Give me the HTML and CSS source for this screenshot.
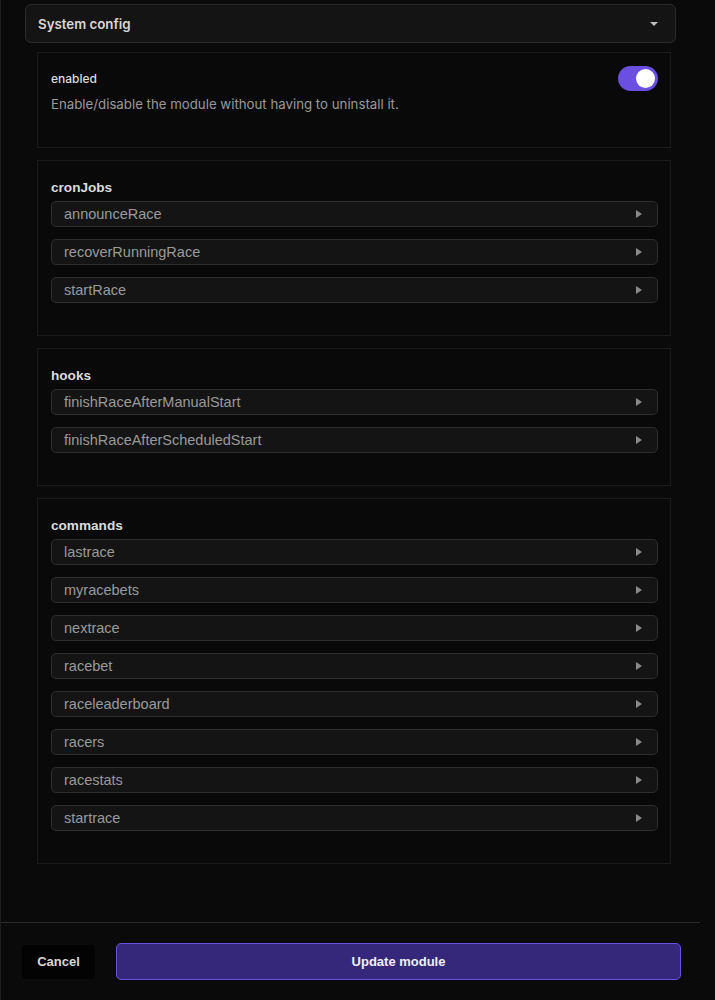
FILE: index.html
```html
<!DOCTYPE html>
<html lang="en">
<head>
  <meta charset="UTF-8">
  <meta name="viewport" content="width=device-width, initial-scale=1.0">
  <title>Module config</title>
  <link rel="stylesheet" href="styles.css">
</head>
<body>
  <div class="drawer">
    <div class="drawer-body">
      <div class="accordion">
        <span>System config</span>
        <svg class="caret" width="8" height="4" viewBox="0 0 8 4"><path d="M0 0h8L4 4z" fill="#bdbdbd"/></svg>
      </div>

      <section class="card card-enabled">
        <div class="field-row">
          <span class="field-label">enabled</span>
          <span class="toggle"><span class="knob"></span></span>
        </div>
        <p class="field-desc">Enable/disable the module without having to uninstall it.</p>
      </section>

      <section class="card">
        <h3>cronJobs</h3>
        <div class="items">
          <div class="item">announceRace</div>
          <div class="item">recoverRunningRace</div>
          <div class="item">startRace</div>
        </div>
      </section>

      <section class="card">
        <h3>hooks</h3>
        <div class="items">
          <div class="item">finishRaceAfterManualStart</div>
          <div class="item">finishRaceAfterScheduledStart</div>
        </div>
      </section>

      <section class="card">
        <h3>commands</h3>
        <div class="items">
          <div class="item">lastrace</div>
          <div class="item">myracebets</div>
          <div class="item">nextrace</div>
          <div class="item">racebet</div>
          <div class="item">raceleaderboard</div>
          <div class="item">racers</div>
          <div class="item">racestats</div>
          <div class="item">startrace</div>
        </div>
      </section>
    </div>

    <footer class="drawer-footer">
      <button class="btn-cancel">Cancel</button>
      <button class="btn-update">Update module</button>
    </footer>
  </div>
</body>
</html>
```

FILE: styles.css
```css
*, *::before, *::after {
  margin: 0;
  padding: 0;
  box-sizing: border-box;
}

body {
  background-color: #0a0a0a;
  font-family: "Liberation Sans", Arial, sans-serif;
  color: #dcdcdc;
  height: 1000px;
  overflow: hidden;
}

.drawer {
  width: 700px;
  height: 1000px;
  border-left: 1px solid #1e1e1e;
  display: flex;
  flex-direction: column;
}

.drawer-body {
  flex: 1;
  padding: 4px 24px 0 24px;
}

.accordion {
  height: 39px;
  background-color: #141414;
  border: 1px solid #2c2c2c;
  border-radius: 6px;
  display: flex;
  align-items: center;
  justify-content: space-between;
  padding: 0 17px 0 12px;
  font-family: Inter, "Liberation Sans", sans-serif;
  font-size: 13.3px;
  font-weight: 600;
  color: #d8d8d8;
}

.caret {
  display: block;
}

.card {
  margin: 9px 5px 0 12px;
  border: 1px solid #1b1b1b;
  background-color: #090909;
  padding: 19px 12px 32px 13px;
}

.card + .card {
  margin-top: 12px;
}

.card-enabled {
  padding: 13px 12px 35px 13px;
}

.field-row {
  display: flex;
  justify-content: space-between;
  align-items: center;
}

.field-label {
  font-family: Inter, "Liberation Sans", sans-serif;
  font-size: 12px;
  font-weight: 500;
  color: #dcdcdc;
}

.toggle {
  width: 40px;
  height: 25px;
  border-radius: 13px;
  background-color: #6a4fe0;
  display: flex;
  align-items: center;
  justify-content: flex-end;
  padding-right: 3px;
}

.knob {
  width: 19px;
  height: 19px;
  border-radius: 50%;
  background-color: #fff;
}

.field-desc {
  margin-top: 5px;
  font-family: Inter, "Liberation Sans", sans-serif;
  font-size: 13.25px;
  line-height: 16px;
  color: #9a9a9a;
}

.card h3 {
  font-size: 13.6px;
  font-weight: bold;
  color: #dcdcdc;
  line-height: 16px;
  margin-bottom: 5px;
}

.items {
  display: flex;
  flex-direction: column;
  gap: 12px;
}

.item {
  height: 26px;
  background-color: #141414;
  border: 1px solid #2e2e2e;
  border-radius: 5px;
  padding: 0 15px 0 12px;
  font-size: 14.5px;
  color: #9a9a9a;
  display: flex;
  align-items: center;
  justify-content: space-between;
}

.item::after {
  content: "";
  border-left: 6px solid #8a8a8a;
  border-top: 4px solid transparent;
  border-bottom: 4px solid transparent;
}

.drawer-footer {
  border-top: 1px solid #2a2a2a;
  height: 78px;
  display: flex;
  align-items: center;
  gap: 21px;
  padding: 0 19px 0 21px;
}

.drawer-footer button {
  font-family: "Liberation Sans", Arial, sans-serif;
  font-size: 13px;
  font-weight: bold;
  cursor: pointer;
}

.btn-cancel {
  width: 73px;
  height: 34px;
  background-color: #030303;
  color: #d8d8d8;
  border: none;
  border-radius: 4px;
}

.btn-update {
  flex: 1;
  height: 37px;
  background-color: #35287a;
  color: #f0f0f0;
  border: 1px solid #6a4fe0;
  border-radius: 5px;
}
```
